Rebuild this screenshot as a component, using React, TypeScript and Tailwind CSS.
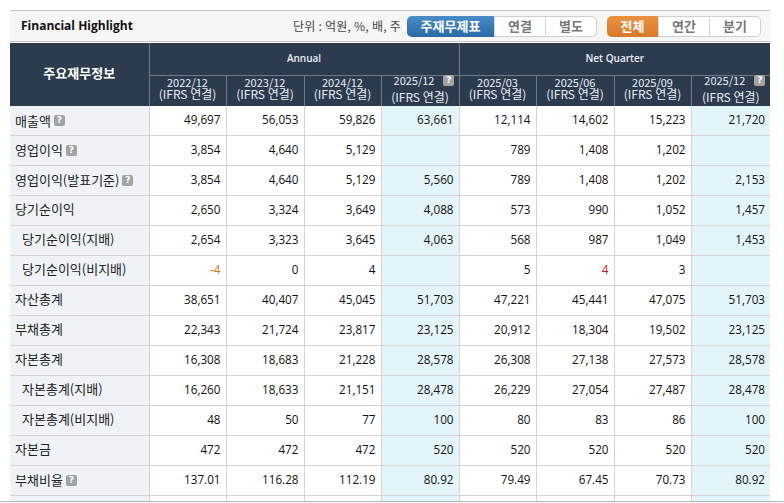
const font = "font-['Noto_Sans_CJK_KR','DejaVu_Sans',sans-serif]";

type Row = { label: string; help?: boolean; indent?: boolean; values: string[] };

const rows: Row[] = [
  { label: "매출액", help: true, values: ["49,697", "56,053", "59,826", "63,661", "12,114", "14,602", "15,223", "21,720"] },
  { label: "영업이익", help: true, values: ["3,854", "4,640", "5,129", "", "789", "1,408", "1,202", ""] },
  { label: "영업이익(발표기준)", help: true, values: ["3,854", "4,640", "5,129", "5,560", "789", "1,408", "1,202", "2,153"] },
  { label: "당기순이익", values: ["2,650", "3,324", "3,649", "4,088", "573", "990", "1,052", "1,457"] },
  { label: "당기순이익(지배)", indent: true, values: ["2,654", "3,323", "3,645", "4,063", "568", "987", "1,049", "1,453"] },
  { label: "당기순이익(비지배)", indent: true, values: ["-4", "0", "4", "", "5", "4", "3", ""] },
  { label: "자산총계", values: ["38,651", "40,407", "45,045", "51,703", "47,221", "45,441", "47,075", "51,703"] },
  { label: "부채총계", values: ["22,343", "21,724", "23,817", "23,125", "20,912", "18,304", "19,502", "23,125"] },
  { label: "자본총계", values: ["16,308", "18,683", "21,228", "28,578", "26,308", "27,138", "27,573", "28,578"] },
  { label: "자본총계(지배)", indent: true, values: ["16,260", "18,633", "21,151", "28,478", "26,229", "27,054", "27,487", "28,478"] },
  { label: "자본총계(비지배)", indent: true, values: ["48", "50", "77", "100", "80", "83", "86", "100"] },
  { label: "자본금", values: ["472", "472", "472", "520", "520", "520", "520", "520"] },
  { label: "부채비율", help: true, values: ["137.01", "116.28", "112.19", "80.92", "79.49", "67.45", "70.73", "80.92"] },
];

const periods = [
  { date: "2022/12" },
  { date: "2023/12" },
  { date: "2024/12" },
  { date: "2025/12", help: true },
  { date: "2025/03" },
  { date: "2025/06" },
  { date: "2025/09" },
  { date: "2025/12", help: true },
];

function HelpIcon() {
  return (
    <span className="inline-flex h-[11px] w-[11px] items-center justify-center rounded-[2px] bg-[#a3a3a3] font-['DejaVu_Sans',sans-serif] text-[9px] leading-none font-bold text-white">
      ?
    </span>
  );
}

function ToggleGroup({ items, active, firstWidth }: { items: string[]; active: string; firstWidth: string }) {
  return (
    <div className="flex h-[21px] rounded-[5px] border border-[#cfcfcf] bg-white">
      {items.map((item, i) => (
        <div
          key={item}
          className={`flex items-center justify-center whitespace-nowrap text-[13px] font-bold ${
            i === 0
              ? `${active} ${firstWidth} -my-px -ml-px h-[21px] rounded-l-[5px]`
              : "h-full w-[51px] border-l border-[#d4d4d4] text-[#777777]"
          }`}
        >
          {item}
        </div>
      ))}
    </div>
  );
}

export default function App() {
  return (
    <div className={`h-[502px] w-[784px] overflow-hidden border-b border-[#b5b5b5] bg-white pt-2.5 pl-2.5 text-[12px] text-[#222222] ${font}`}>
      <div className="w-[760px]">
        <div className="flex h-[32px] items-center border-t border-b border-[#c4c4c4] bg-[#f6f6f6] pr-[9px] pl-[11px]">
          <span className="font-['Open_Sans',sans-serif] text-[12px] font-bold text-[#111111]">Financial Highlight</span>
          <span className="ml-auto text-[12px] tracking-[0.25px] text-[#444444]">단위 : 억원, %, 배, 주</span>
          <div className="ml-[6px]">
            <ToggleGroup items={["주재무제표", "연결", "별도"]} firstWidth="w-[87px]" active="bg-gradient-to-b from-[#4a8cc7] to-[#2a6aa8] text-white" />
          </div>
          <div className="ml-[10px]">
            <ToggleGroup items={["전체", "연간", "분기"]} firstWidth="w-[51px]" active="bg-gradient-to-b from-[#e9923f] to-[#d9792b] text-white" />
          </div>
        </div>
        <table className="mt-px w-[760px] table-fixed border-collapse">
          <colgroup>
            <col className="w-[139px]" />
            <col className="w-[77px]" />
            <col className="w-[78px]" />
            <col className="w-[77px]" />
            <col className="w-[78px]" />
            <col className="w-[77px]" />
            <col className="w-[78px]" />
            <col className="w-[77px]" />
            <col className="w-[79px]" />
          </colgroup>
          <thead className="bg-[#2c3b4d] text-[#e8eef4]">
            <tr className="h-[32px]">
              <th rowSpan={2} className="border-r border-[#6d7a88] pb-[3px] text-[13px] font-bold text-white">주요재무정보</th>
              <th colSpan={4} className="border-r border-b border-[#6d7a88] font-['Open_Sans',sans-serif] text-[10px] font-semibold">Annual</th>
              <th colSpan={4} className="border-b border-[#6d7a88] font-['Open_Sans',sans-serif] text-[10px] font-semibold">Net Quarter</th>
            </tr>
            <tr className="h-[31px]">
              {periods.map((p, i) => (
                <th key={i} className={`p-0 text-center text-[12px] leading-[12px] font-normal ${p.help ? "pb-0" : "pb-[5px]"} ${i < 7 ? "border-r border-[#6d7a88]" : ""}`}>
                  <div className={`flex items-center justify-center text-[11px] ${p.help ? "mb-[5px] -mt-1 gap-[9px] pl-2" : ""}`}>
                    {p.date}
                    {p.help && <HelpIcon />}
                  </div>
                  <div>(IFRS 연결)</div>
                </th>
              ))}
            </tr>
          </thead>
          <tbody>
            {rows.map((row, r) => (
              <tr key={row.label} className={r === 0 ? "h-[29px]" : "h-[30px]"}>
                <th className={`border-r border-b border-[#d4d4d4] bg-[#eff3f8] text-left text-[13px] font-normal ${row.indent ? "pl-3" : "pl-[5px]"} ${row.help ? "" : "pb-[3px]"}`}>
                  <span className="inline-flex items-center gap-[3px]">
                    {row.label}
                    {row.help && <HelpIcon />}
                  </span>
                </th>
                {row.values.map((v, i) => (
                  <td
                    key={i}
                    className={`border-r border-b border-[#d4d4d4] pr-[5px] text-right font-['Open_Sans',sans-serif] text-[11.7px] last:border-r-0 ${
                      i === 3 || i === 7 ? "bg-[#e4f4fb]" : ""
                    } ${v === "-4" ? "text-[#c8741a]" : v === "4" && i === 5 ? "text-[#c81e1e]" : "text-[#111111]"}`}
                  >
                    {v}
                  </td>
                ))}
              </tr>
            ))}
            <tr className="h-[6px]">
              <th className="border-r border-[#d4d4d4] bg-[#eff3f8]" />
              {periods.map((_, i) => (
                <td key={i} className={`border-r border-[#d4d4d4] last:border-r-0 ${i === 3 || i === 7 ? "bg-[#e4f4fb]" : ""}`} />
              ))}
            </tr>
          </tbody>
        </table>
      </div>
    </div>
  );
}
